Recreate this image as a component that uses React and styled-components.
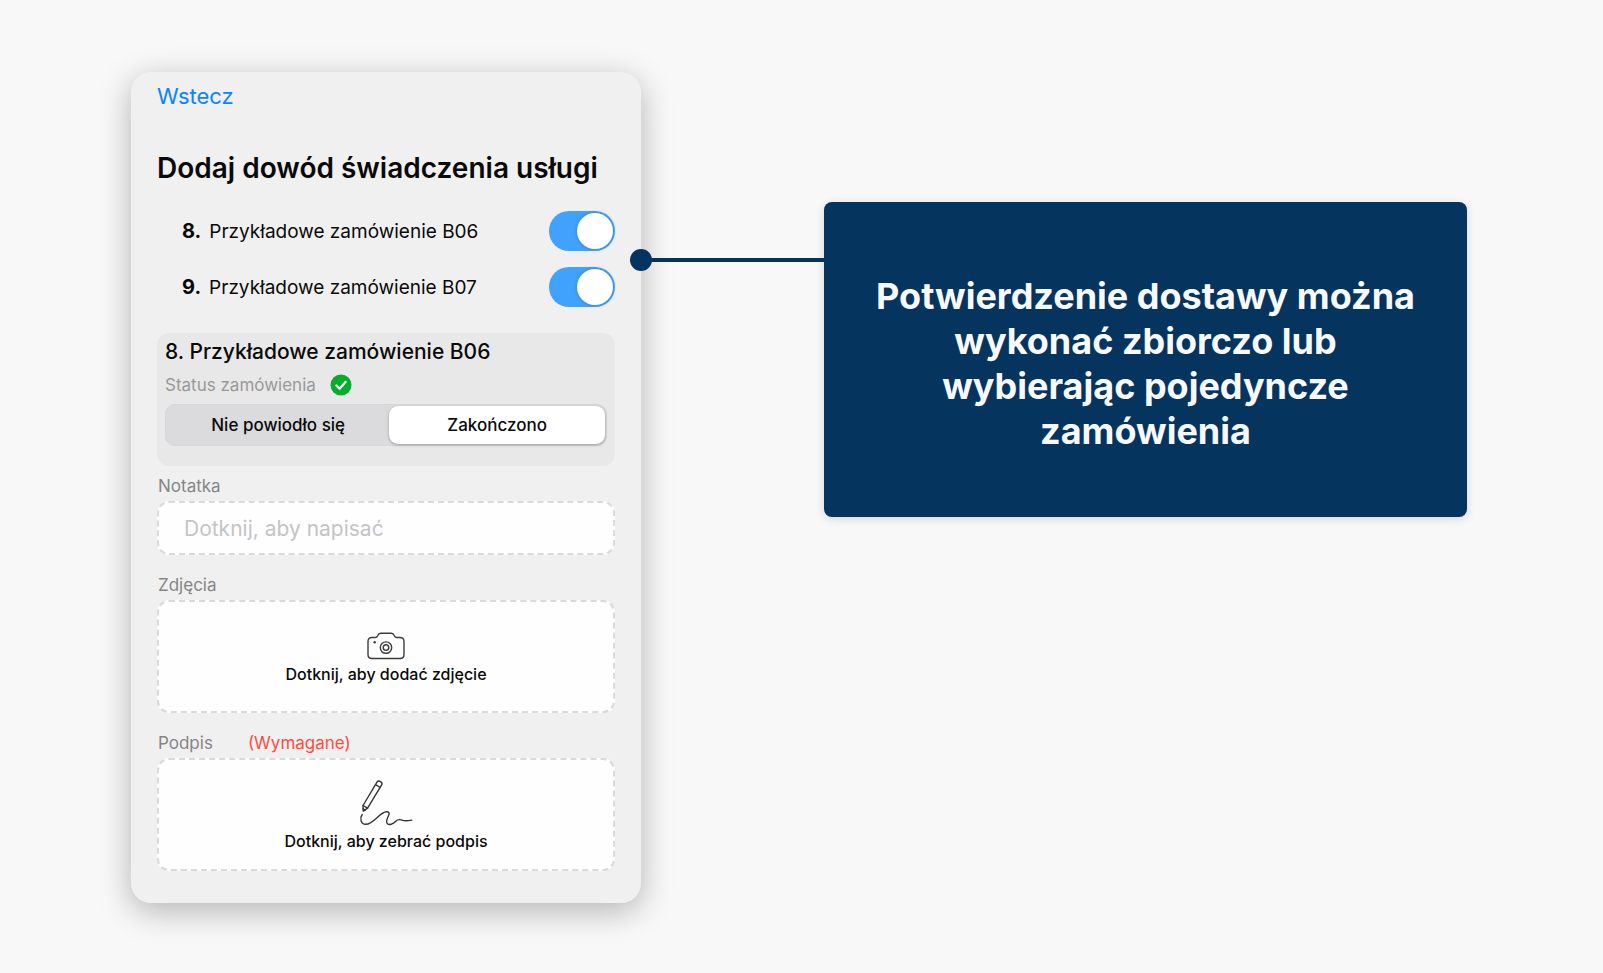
import React, { useState } from "react";
import styled, { createGlobalStyle } from "styled-components";

const GlobalStyle = createGlobalStyle`
    * {
        box-sizing: border-box;
    }

    body {
        margin: 0;
        background-color: #f8f8f8;
        font-family: Inter, "Liberation Sans", sans-serif;
        color: #0a0a0a;
    }

    button,
    input {
        font-family: inherit;
        color: inherit;
    }
`;

const StyledPage = styled.main`
    display: grid;
    grid-template-columns: 510fr 183fr 643fr;
    align-items: start;
    min-height: 100vh;
    padding: 72px 136px 70px 131px;
`;

const StyledCard = styled.section`
    display: flex;
    flex-direction: column;
    padding: 10px 26px 32px;
    border-radius: 20px;
    background-color: #f0f0f0;
    box-shadow: 0 8px 32px rgba(0, 0, 0, 0.28);
`;

const StyledBack = styled.button`
    align-self: flex-start;
    padding: 0;
    border: none;
    background: none;
    color: #0a84ff;
    font-size: 22px;
    line-height: 28px;
    cursor: pointer;
`;

const StyledTitle = styled.h1`
    margin: 39px 0 24px;
    font-size: 28px;
    font-weight: 600;
    line-height: 38px;
    white-space: nowrap;
`;

const StyledOrders = styled.div`
    display: flex;
    flex-direction: column;
    gap: 16px;
    padding-left: 25px;
`;

const StyledOrder = styled.label`
    display: flex;
    align-items: center;
    gap: 8px;
    height: 40px;
    font-size: 19px;
    white-space: nowrap;
    cursor: pointer;

    b {
        font-size: 20px;
        font-weight: 700;
    }
`;

const StyledSwitch = styled.input`
    appearance: none;
    display: flex;
    flex-shrink: 0;
    width: 66px;
    height: 40px;
    margin: 0 0 0 auto;
    padding: 2px;
    border-radius: 20px;
    background-color: #c7c7cc;
    cursor: pointer;

    &::before {
        content: "";
        width: 36px;
        height: 36px;
        border-radius: 50%;
        background-color: #fff;
        box-shadow: 0 0 4px rgba(0, 0, 0, 0.2);
    }

    &:checked {
        justify-content: flex-end;
        background-color: #41a2fd;
    }
`;

const StyledStatusPanel = styled.fieldset`
    min-width: 0;
    margin: 26px 0 8px;
    padding: 5px 8px 20px;
    border: none;
    border-radius: 12px;
    background-color: #e8e8e8;
`;

const StyledPanelTitle = styled.h2`
    margin: 0;
    font-size: 21px;
    font-weight: 500;
    line-height: 28px;
    white-space: nowrap;
`;

const StyledStatus = styled.div`
    display: flex;
    align-items: center;
    gap: 14px;
    height: 38px;
    color: #98989b;
    font-size: 17px;
`;

const StyledSegments = styled.div`
    display: grid;
    grid-template-columns: 33fr 32fr;
    padding: 2px;
    border-radius: 11px;
    background-color: #dbdbdd;
    box-shadow: inset 0 0 1px rgba(0, 0, 0, 0.15);
`;

const StyledSegment = styled.label`
    display: flex;
    align-items: center;
    justify-content: center;
    height: 38px;
    border-radius: 9px;
    font-size: 17px;
    font-weight: 500;
    white-space: nowrap;
    cursor: pointer;

    input {
        appearance: none;
        width: 0;
        margin: 0;
    }

    &:has(input:checked) {
        background-color: #fff;
        box-shadow: 0 1px 3px rgba(0, 0, 0, 0.3);
    }
`;

const StyledLabel = styled.label`
    display: flex;
    gap: 35px;
    padding: 0 1px;
    color: #858587;
    font-size: 17px;
    line-height: 24px;
`;

const StyledRequired = styled.span`
    color: #ff4b3e;
`;

const StyledNote = styled.input`
    width: 100%;
    height: 54px;
    margin: 3px 0 18px;
    padding: 0 25px;
    border: 2px dashed #dadada;
    border-radius: 12px;
    background-color: #fefefe;
    font-size: 21px;

    &::placeholder {
        color: #c4c4c6;
        opacity: 1;
    }
`;

const StyledDropBox = styled.button`
    display: flex;
    flex-direction: column;
    align-items: center;
    justify-content: flex-end;
    gap: 2px;
    width: 100%;
    height: 113px;
    margin: 3px 0 0;
    padding: 0 0 ${(props) => (props.$low ? "16px" : "25px")};
    border: 2px dashed #dadada;
    border-radius: 12px;
    background-color: #fefefe;
    font-size: 16px;
    font-weight: 500;
    line-height: 24px;
    cursor: pointer;

    & + label {
        margin-top: 18px;
    }
`;

const StyledConnector = styled.div`
    position: relative;
    height: 4px;
    margin-top: 186px;
    background-color: #05335f;

    &::before {
        content: "";
        position: absolute;
        top: -9px;
        left: -11px;
        width: 22px;
        height: 22px;
        border-radius: 50%;
        background-color: #05335f;
    }
`;

const StyledCallout = styled.aside`
    display: flex;
    align-items: center;
    justify-content: center;
    min-height: 315px;
    margin-top: 130px;
    padding: 48px 40px 40px;
    border-radius: 8px;
    background-color: #05345f;
    box-shadow: 0 2px 10px rgba(0, 0, 0, 0.14);

    p {
        margin: 0;
        color: #f7f9fc;
        font-size: 36px;
        font-weight: 700;
        line-height: 45px;
        text-align: center;
    }
`;

function CheckIcon() {
    return (
        <svg width="22" height="22" viewBox="0 0 22 22" aria-hidden="true">
            <circle cx="11" cy="11" r="10.5" fill="#06ac2b" />
            <path
                d="M6.4 11.5 9.7 14.7 15.7 7.8"
                fill="none"
                stroke="#fff"
                strokeWidth="2.2"
                strokeLinecap="round"
                strokeLinejoin="round"
            />
        </svg>
    );
}

function CameraIcon() {
    return (
        <svg
            width="38"
            height="28"
            viewBox="0 0 38 28"
            fill="none"
            stroke="#3c3c3e"
            strokeWidth="1.4"
            aria-hidden="true"
        >
            <path d="M5 5.5h3.2c1.6 0 2-.6 2.5-1.8.6-1.7 1.3-2.4 3-2.4h10.6c1.7 0 2.4.7 3 2.4.5 1.2.9 1.8 2.5 1.8H33c2.6 0 4 1.4 4 4v13c0 2.6-1.4 4-4 4H5c-2.6 0-4-1.4-4-4v-13c0-2.6 1.4-4 4-4Z" />
            <circle cx="19" cy="15.6" r="5.7" />
            <circle cx="19" cy="15.6" r="2.8" />
            <circle cx="7.7" cy="10.2" r="1.2" fill="#3c3c3e" stroke="none" />
        </svg>
    );
}

function SignatureIcon() {
    return (
        <svg
            width="54"
            height="48"
            viewBox="0 0 54 48"
            fill="none"
            stroke="#353537"
            strokeWidth="1.4"
            strokeLinecap="round"
            strokeLinejoin="round"
            aria-hidden="true"
        >
            <path d="M4 26.5 18 3.2c1.5-2.4 6-.2 4.8 2.5L8.6 29.2l-4.4 3Z" />
            <path d="M16.6 5.7 21.2 8.5M4 26.5l4.6 2.7M4.1 29.8l2.2 1.2" />
            <path d="M3.2 35.5C.4 39.5 1.8 45.2 6.8 45.3 14.8 45.4 20.8 32.4 27.8 32.7c6 .3-1.8 7.4 0 11 1.7 3.5 6.7 1.1 9-1.4 3-3.4 4.4-1.2 8-.7 2.7.4 5 .1 8-.5" />
        </svg>
    );
}

const orders = [
    { id: 8, name: "Przykładowe zamówienie B06" },
    { id: 9, name: "Przykładowe zamówienie B07" },
];

export default function App() {
    const [selected, setSelected] = useState({ 8: true, 9: true });
    const [status, setStatus] = useState("Zakończono");
    const [note, setNote] = useState("");

    const toggleOrder = (id) => {
        setSelected({ ...selected, [id]: !selected[id] });
    };

    return (
        <>
            <GlobalStyle />
            <StyledPage>
                <StyledCard>
                    <StyledBack type="button">Wstecz</StyledBack>
                    <StyledTitle>Dodaj dowód świadczenia usługi</StyledTitle>
                    <StyledOrders>
                        {orders.map(({ id, name }) => (
                            <StyledOrder key={id}>
                                <b>{id}.</b>
                                <span>{name}</span>
                                <StyledSwitch
                                    type="checkbox"
                                    role="switch"
                                    checked={selected[id]}
                                    onChange={() => toggleOrder(id)}
                                />
                            </StyledOrder>
                        ))}
                    </StyledOrders>
                    <StyledStatusPanel>
                        <StyledPanelTitle>8. Przykładowe zamówienie B06</StyledPanelTitle>
                        <StyledStatus>
                            Status zamówienia
                            <CheckIcon />
                        </StyledStatus>
                        <StyledSegments>
                            {["Nie powiodło się", "Zakończono"].map((option) => (
                                <StyledSegment key={option}>
                                    <input
                                        type="radio"
                                        name="status"
                                        checked={status === option}
                                        onChange={() => setStatus(option)}
                                    />
                                    {option}
                                </StyledSegment>
                            ))}
                        </StyledSegments>
                    </StyledStatusPanel>
                    <StyledLabel htmlFor="note">Notatka</StyledLabel>
                    <StyledNote
                        id="note"
                        placeholder="Dotknij, aby napisać"
                        value={note}
                        onChange={(e) => setNote(e.target.value)}
                    />
                    <StyledLabel htmlFor="photos">Zdjęcia</StyledLabel>
                    <StyledDropBox id="photos" type="button">
                        <CameraIcon />
                        Dotknij, aby dodać zdjęcie
                    </StyledDropBox>
                    <StyledLabel htmlFor="signature">
                        Podpis <StyledRequired>(Wymagane)</StyledRequired>
                    </StyledLabel>
                    <StyledDropBox id="signature" type="button" $low>
                        <SignatureIcon />
                        Dotknij, aby zebrać podpis
                    </StyledDropBox>
                </StyledCard>
                <StyledConnector />
                <StyledCallout>
                    <p>
                        Potwierdzenie dostawy można wykonać zbiorczo lub wybierając
                        pojedyncze zamówienia
                    </p>
                </StyledCallout>
            </StyledPage>
        </>
    );
}
